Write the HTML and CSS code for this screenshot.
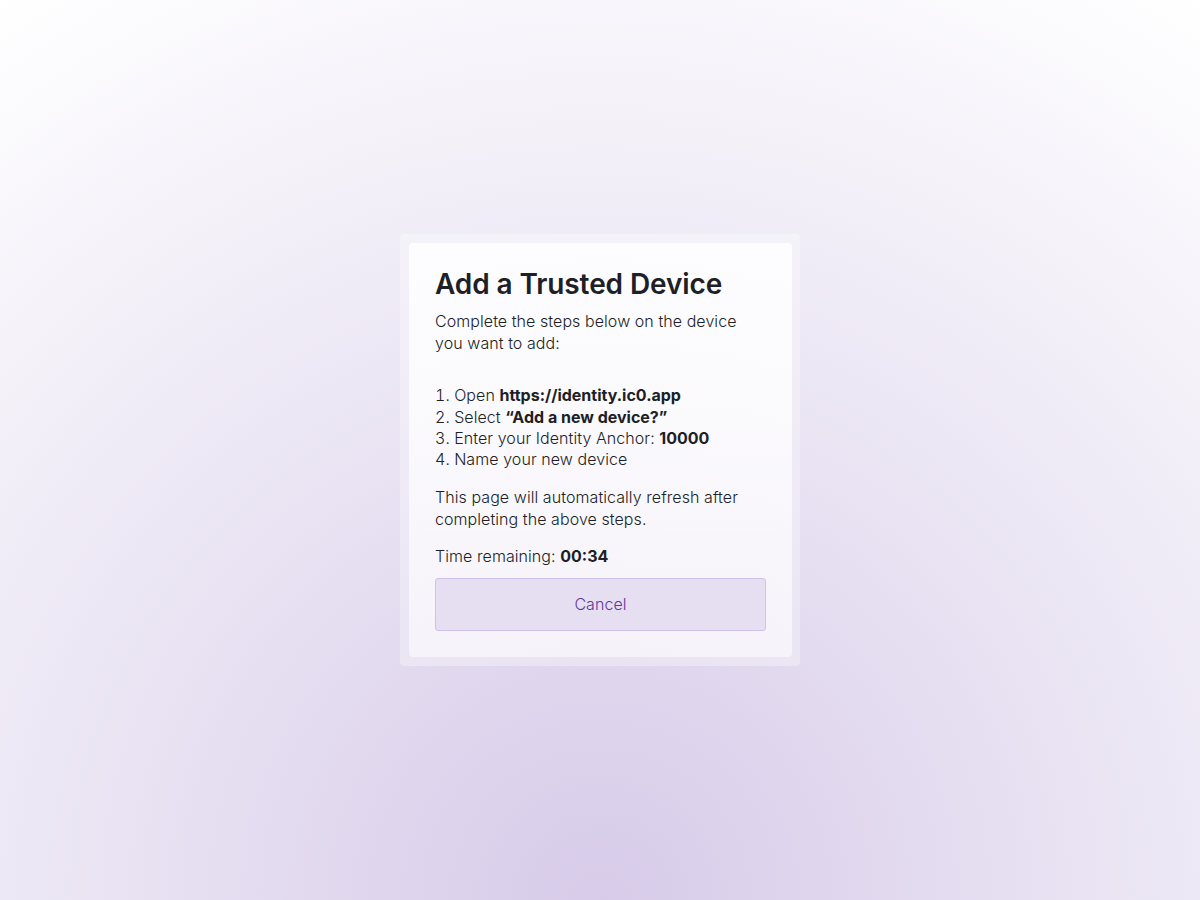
FILE: index.html
```html
<!DOCTYPE html>
<html lang="en">
<head>
<meta charset="utf-8">
<title>Add a Trusted Device</title>
<link rel="stylesheet" href="styles.css">
</head>
<body>
<main class="page">
  <div class="frame">
    <section class="card">
      <h1 class="title">Add a Trusted Device</h1>
      <p class="intro">Complete the steps below on the device you want to add:</p>
      <ol class="steps">
        <li>Open <strong>https://identity.ic0.app</strong></li>
        <li>Select <strong>“Add a new device?”</strong></li>
        <li>Enter your Identity Anchor: <strong>10000</strong></li>
        <li>Name your new device</li>
      </ol>
      <p class="note">This page will automatically refresh after completing the above steps.</p>
      <p class="timer">Time remaining: <strong>00:34</strong></p>
      <button class="cancel" type="button">Cancel</button>
    </section>
  </div>
</main>
</body>
</html>
```
FILE: styles.css
```css
html, body {
  margin: 0;
  padding: 0;
  height: 100%;
}
body {
  font-family: Inter, "Noto Sans", sans-serif;
  font-weight: 300;
  letter-spacing: 0.07px;
  color: #201e26;
  background: radial-gradient(circle at 50% 100%, #d7cbe9 0%, #e9e3f3 45%, #ffffff 100%);
  background-size: 1200px 900px;
  background-repeat: no-repeat;
  background-color: #fff;
}
.page {
  height: 900px;
  display: flex;
  align-items: center;
  justify-content: center;
}
.frame {
  width: 400px;
  box-sizing: border-box;
  padding: 9px 8px 9px 9px;
  background: rgba(255, 255, 255, 0.3);
  border-radius: 4px;
}
.card {
  box-sizing: border-box;
  padding: 26px;
  border-radius: 4px;
  background: linear-gradient(180deg, rgba(255,255,255,0.82), rgba(255,255,255,0.55));
}
.title {
  margin: 0;
  font-size: 28px;
  line-height: 30px;
  font-weight: 600;
  letter-spacing: -0.1px;
}
.intro {
  margin: 11px 0 0;
  font-size: 16px;
  line-height: 22px;
}
.steps {
  margin: 31px 0 0;
  padding: 0;
  list-style-position: inside;
  font-size: 16px;
  line-height: 21.33px;
}
.steps strong, .timer strong {
  font-weight: 700;
  letter-spacing: 0;
}
.note {
  margin: 15px 0 0;
  font-size: 16px;
  line-height: 22px;
}
.timer {
  margin: 15px 0 0;
  font-size: 16px;
  line-height: 22px;
}
.cancel {
  display: block;
  width: 100%;
  height: 53px;
  margin-top: 11px;
  font-family: inherit;
  font-weight: 300;
  font-size: 16px;
  letter-spacing: inherit;
  color: #5f3599;
  background: #e6dff2;
  border: 1px solid #cfc1ea;
  border-radius: 3px;
  cursor: pointer;
}
```
